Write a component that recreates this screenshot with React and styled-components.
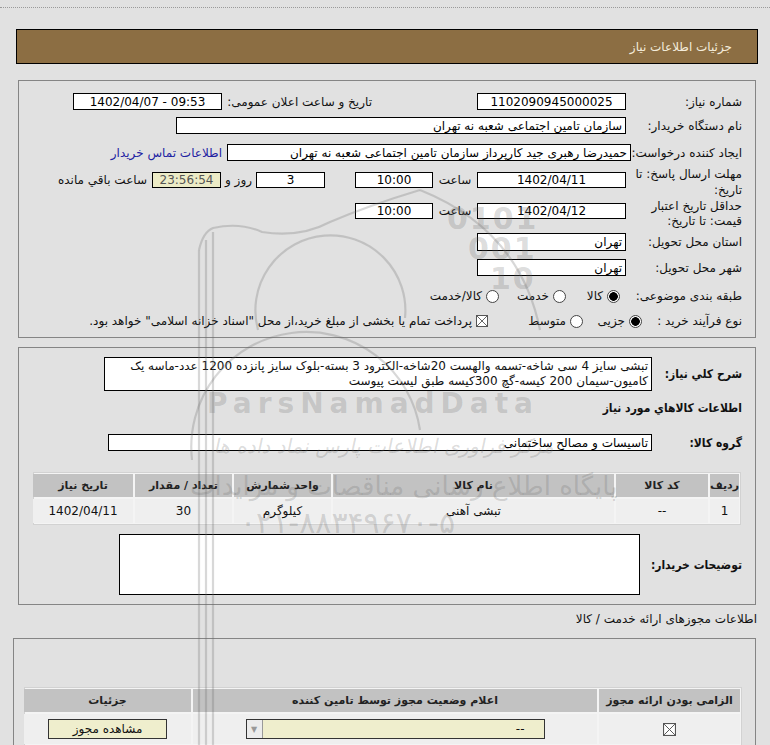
import React from "react";
import styled, { createGlobalStyle } from "styled-components";

const Global = createGlobalStyle`
  html, body { margin: 0; padding: 0; background: #e1e1e1; overflow: hidden; }
`;

const Page = styled.div`
  position: relative;
  width: 770px;
  height: 745px;
  overflow: hidden;
  box-sizing: border-box;
  padding-top: 7px;
  background: #e1e1e1;
  direction: rtl;
  font-family: "DejaVu Sans", Tahoma, sans-serif;
  font-size: 12px;
  color: #111;
`;

const DottedRule = styled.div`
  border-top: 1px dotted #9a9a9a;
`;

const HeaderBar = styled.div`
  box-sizing: border-box;
  height: 35px;
  margin: 21px 12px 0 16px;
  border: 1px solid #000;
  background: #8c6e43;
  color: #f4ecdb;
  display: flex;
  align-items: center;
  padding-right: 25px;
  font-size: 12px;
`;

const Panel = styled.div`
  box-sizing: border-box;
  height: ${(p) => p.$h}px;
  margin: ${(p) => p.$mt}px 14px 0 ${(p) => p.$ml}px;
  padding-top: ${(p) => p.$pt}px;
  border: 1px solid #858585;
  display: flex;
  flex-direction: column;
`;

const Row = styled.div`
  display: flex;
  align-items: ${(p) => (p.$top ? "flex-start" : "center")};
  height: ${(p) => p.$h}px;
  margin-top: ${(p) => p.$mt || 0}px;
  padding-right: 13px;
  flex: none;
`;

const Cluster = styled.div`
  display: flex;
  align-items: center;
  height: ${(p) => p.$h}px;
  margin-top: ${(p) => p.$mt}px;
`;

const Label = styled.div`
  flex: none;
  width: ${(p) => (p.$w ? `${p.$w}px` : "auto")};
  margin-right: ${(p) => p.$mr || 0}px;
  text-align: right;
  white-space: nowrap;
  font-family: ${(p) =>
    p.$bold ? '"DejaVu Sans Condensed", "DejaVu Sans", sans-serif' : "inherit"};
  font-size: 12px;
  font-weight: ${(p) => (p.$bold ? 700 : 400)};
  line-height: ${(p) => (p.$lh ? `${p.$lh}px` : "normal")};
  color: #111;
`;

const Word = styled.div`
  flex: none;
  width: ${(p) => (p.$w ? `${p.$w}px` : "auto")};
  margin-right: ${(p) => p.$mr || 0}px;
  text-align: center;
  white-space: nowrap;
`;

const Field = styled.div`
  box-sizing: border-box;
  flex: none;
  width: ${(p) => p.$w}px;
  height: ${(p) => p.$h || 17}px;
  margin-right: ${(p) => p.$mr || 0}px;
  border: 1px solid #000;
  background: ${(p) => (p.$tint ? "#ecebc6" : "#fff")};
  color: ${(p) => (p.$tint ? "#555" : "#000")};
  display: flex;
  align-items: center;
  justify-content: ${(p) => (p.$center ? "center" : "flex-start")};
  padding: 0 3px;
  white-space: nowrap;
  overflow: hidden;
`;

const TextBlock = styled.div`
  box-sizing: border-box;
  flex: none;
  width: ${(p) => p.$w}px;
  height: ${(p) => p.$h}px;
  border: 1px solid #000;
  background: #fff;
  padding: 1px 3px;
  line-height: 15px;
  text-align: right;
  white-space: nowrap;
  overflow: hidden;
`;

const ContactLink = styled.a`
  margin-right: 5px;
  color: #2222a2;
  text-decoration: none;
  white-space: nowrap;
`;

const Choice = styled.div`
  flex: none;
  display: flex;
  align-items: center;
  gap: 4px;
  width: ${(p) => (p.$w ? `${p.$w}px` : "auto")};
  white-space: nowrap;
`;

const Radio = styled.span`
  box-sizing: border-box;
  width: 13px;
  height: 13px;
  border-radius: 50%;
  border: 1px solid #444;
  background: ${(p) =>
    p.$checked ? "radial-gradient(circle, #000 0 4px, #fff 4.6px)" : "#fff"};
  flex: none;
`;

const CheckMark = styled.svg`
  flex: none;
  width: ${(p) => p.$s}px;
  height: ${(p) => p.$s}px;
  display: block;
`;

const Grid = styled.div`
  box-sizing: border-box;
  display: grid;
  grid-template-columns: ${(p) => p.$cols};
  grid-template-rows: ${(p) => p.$rows};
  gap: 2px;
  padding: 1px;
  width: ${(p) => p.$w}px;
  margin-top: ${(p) => p.$mt}px;
  margin-right: ${(p) => p.$mr}px;
  background: #f4f4f4;
  border: 1px solid #d2d2d2;
  flex: none;
`;

const HeadCell = styled.div`
  background: #c2c2c2;
  display: flex;
  align-items: center;
  justify-content: center;
  font-size: 11px;
  font-weight: 700;
  color: #222;
  white-space: nowrap;
`;

const Cell = styled.div`
  background: #efefef;
  display: flex;
  align-items: center;
  justify-content: center;
  white-space: nowrap;
`;

const SectionTitle = styled.div`
  margin: 7px 13px 0 0;
  height: 15px;
  line-height: 15px;
  white-space: nowrap;
`;

const SelectBox = styled.div`
  box-sizing: border-box;
  width: 299px;
  height: 20px;
  border: 1px solid #333;
  background: #efeecd;
  display: flex;
  align-items: center;
  justify-content: space-between;
  padding-right: 19px;
`;

const DropBtn = styled.span`
  box-sizing: border-box;
  width: 16px;
  height: 100%;
  background: #ececec;
  border-right: 1px solid #999;
  display: flex;
  align-items: center;
  justify-content: center;
  color: #999;
  font-size: 8px;
`;

const ActionButton = styled.div`
  box-sizing: border-box;
  width: 119px;
  height: 20px;
  border: 1px solid #333;
  background: #efeecd;
  display: flex;
  align-items: center;
  justify-content: center;
`;

const Watermark = styled.div`
  position: absolute;
  inset: 0;
  pointer-events: none;
  z-index: 3;
  color: rgba(105, 105, 105, 0.24);
`;

const WmArt = styled.svg`
  position: absolute;
  left: 0;
  top: 0;
`;

const WmText = styled.div`
  position: absolute;
  left: ${(p) => p.$x}px;
  top: ${(p) => p.$y}px;
  font-family: "DejaVu Sans", sans-serif;
  font-size: ${(p) => p.$size}px;
  font-weight: ${(p) => (p.$bold ? 700 : 400)};
  letter-spacing: ${(p) => p.$ls || 0}px;
  line-height: 1;
  white-space: nowrap;
  direction: ${(p) => (p.$latin ? "ltr" : "rtl")};
  transform: ${(p) => p.$skew || "none"};
`;

const XBox = ({ s = 12 }) => (
  <CheckMark $s={s} viewBox="0 0 12 12">
    <rect x="0.5" y="0.5" width="11" height="11" fill="#fff" stroke="#555" />
    <path d="M1 1 L11 11 M11 1 L1 11" stroke="#555" strokeWidth="0.9" />
  </CheckMark>
);

export default function App() {
  return (
    <>
      <Global />
      <Page>
        <DottedRule />
        <HeaderBar>جزئیات اطلاعات نیاز</HeaderBar>

        <Panel $h={258} $mt={16} $ml={18} $pt={12}>
          <Row $h={17}>
            <Label $w={116}>شماره نیاز:</Label>
            <Field $w={149} $center>1102090945000025</Field>
            <Label $w={150} $mr={105}>تاریخ و ساعت اعلان عمومی:</Label>
            <Field $w={149} $center>
              <span dir="ltr">1402/04/07 - 09:53</span>
            </Field>
          </Row>
          <Row $h={17} $mt={7}>
            <Label $w={116}>نام دستگاه خریدار:</Label>
            <Field $w={450}>سازمان تامین اجتماعی شعبه نه تهران</Field>
          </Row>
          <Row $h={17} $mt={10}>
            <Label $w={111}>ایجاد کننده درخواست:</Label>
            <Field $w={404}>حمیدرضا رهبری جید کارپرداز سازمان تامین اجتماعی شعبه نه تهران</Field>
            <ContactLink href="#">اطلاعات تماس خریدار</ContactLink>
          </Row>
          <Row $h={32} $mt={5} $top>
            <Label $w={116} $lh={16}>
              مهلت ارسال پاسخ: تا
              <br />
              تاریخ:
            </Label>
            <Cluster $h={16} $mt={6}>
              <Field $w={149} $h={16} $center>1402/04/11</Field>
              <Word $w={44}>ساعت</Word>
              <Field $w={78} $h={16} $center>10:00</Field>
              <Field $w={69} $h={16} $mr={30} $center>3</Field>
              <Word $w={35}>روز و</Word>
              <Field $w={69} $h={16} $center $tint>23:56:54</Field>
              <Word $mr={5}>ساعت باقي مانده</Word>
            </Cluster>
          </Row>
          <Row $h={31} $mt={1} $top>
            <Label $w={116} $lh={15}>
              حداقل تاریخ اعتبار
              <br />
              قیمت: تا تاریخ:
            </Label>
            <Cluster $h={16} $mt={4}>
              <Field $w={149} $h={16} $center>1402/04/12</Field>
              <Word $w={44}>ساعت</Word>
              <Field $w={78} $h={16} $center>10:00</Field>
            </Cluster>
          </Row>
          <Row $h={18} $mt={3}>
            <Label $w={116}>استان محل تحویل:</Label>
            <Field $w={149} $h={18}>تهران</Field>
          </Row>
          <Row $h={17} $mt={8}>
            <Label $w={116}>شهر محل تحویل:</Label>
            <Field $w={149}>تهران</Field>
          </Row>
          <Row $h={18} $mt={11}>
            <Label $w={122}>طبقه بندی موضوعی:</Label>
            <Choice $w={54}>
              <Radio $checked />
              کالا
            </Choice>
            <Choice $w={67}>
              <Radio />
              خدمت
            </Choice>
            <Choice>
              <Radio />
              کالا/خدمت
            </Choice>
          </Row>
          <Row $h={18} $mt={7}>
            <Label $w={100}>نوع فرآیند خرید :</Label>
            <Choice $w={59}>
              <Radio $checked />
              جزیی
            </Choice>
            <Choice $w={95}>
              <Radio />
              متوسط
            </Choice>
            <Choice>
              <XBox s={12} />
              پرداخت تمام یا بخشی از مبلغ خرید،از محل "اسناد خزانه اسلامی" خواهد بود.
            </Choice>
          </Row>
        </Panel>

        <Panel $h={258} $mt={9} $ml={18} $pt={9}>
          <Row $h={34}>
            <Label $w={90} $bold>
              شرح کلي نیاز:
            </Label>
            <TextBlock $w={548} $h={34}>
              تبشی سایز 4 سی شاخه-تسمه والهست 20شاخه-الکترود 3 بسته-بلوک سایز پانزده 1200 عدد-ماسه یک
              <br />
              کامیون-سیمان 200 کیسه-گچ 300کیسه طبق لیست پیوست
            </TextBlock>
          </Row>
          <Row $h={18} $mt={8}>
            <Label $bold>اطلاعات كالاهاي مورد نياز</Label>
          </Row>
          <Row $h={17} $mt={17}>
            <Label $w={90} $bold>
              گروه کالا:
            </Label>
            <Field $w={544}>تاسیسات و مصالح ساختمانی</Field>
          </Row>
          <Grid
            $w={708}
            $mt={21}
            $mr={14}
            $cols="29px 92px 281px 97px 97px 100px"
            $rows="23px 24px"
          >
            <HeadCell>ردیف</HeadCell>
            <HeadCell>کد کالا</HeadCell>
            <HeadCell>نام کالا</HeadCell>
            <HeadCell>واحد شمارش</HeadCell>
            <HeadCell>تعداد / مقدار</HeadCell>
            <HeadCell>تاریخ نیاز</HeadCell>
            <Cell>1</Cell>
            <Cell>--</Cell>
            <Cell>تبشی آهنی</Cell>
            <Cell>کیلوگرم</Cell>
            <Cell>30</Cell>
            <Cell>1402/04/11</Cell>
          </Grid>
          <Row $h={61} $mt={9}>
            <Label $w={102} $bold>
              توضیحات خریدار:
            </Label>
            <TextBlock $w={521} $h={61} />
          </Row>
        </Panel>

        <SectionTitle>اطلاعات مجوزهای ارائه خدمت / کالا</SectionTitle>

        <Panel $h={140} $mt={11} $ml={13} $pt={0}>
          <Grid
            $w={718}
            $mt={48}
            $mr={13}
            $cols="141px 404px 167px"
            $rows="23px 30px"
          >
            <HeadCell>الزامی بودن ارائه مجوز</HeadCell>
            <HeadCell>اعلام وضعیت مجوز توسط تامین کننده</HeadCell>
            <HeadCell>جزئیات</HeadCell>
            <Cell>
              <XBox s={13} />
            </Cell>
            <Cell>
              <SelectBox>
                <span>--</span>
                <DropBtn>▼</DropBtn>
              </SelectBox>
            </Cell>
            <Cell>
              <ActionButton>مشاهده مجوز</ActionButton>
            </Cell>
          </Grid>
        </Panel>

        <Watermark>
          <WmArt width="770" height="745" viewBox="0 0 770 745">
            <g fill="none" stroke="rgba(105,105,105,0.26)" strokeWidth="2.2">
              <path d="M199 250 L199 745 M206 240 L206 745 M213 232 L213 745" />
              <path d="M199 250 Q203 232 213 228 Q240 222 262 232 Q300 238 330 222 Q370 205 420 190" />
              <path d="M258 330 A75 75 0 1 1 405 318" />
              <path d="M192 460 A115 115 0 0 1 420 430" />
              <path d="M420 190 Q520 230 540 330" />
            </g>
          </WmArt>
          <WmText $x={447} $y={204} $size={30} $bold $latin $ls={2}>0101</WmText>
          <WmText $x={468} $y={234} $size={30} $bold $latin $ls={2}>001</WmText>
          <WmText $x={490} $y={264} $size={30} $bold $latin $ls={2}>10</WmText>
          <WmText $x={207} $y={390} $size={28} $bold $latin $ls={6}>ParsNamadData</WmText>
          <WmText $x={215} $y={436} $size={20} $skew="skewX(-12deg)">مرکز فراوری اطلاعات پارس نماد داده ها</WmText>
          <WmText $x={190} $y={473} $size={26}>پایگاه اطلاع رسانی مناقصات و مزایدات</WmText>
          <WmText $x={240} $y={508} $size={30}>۰۲۱-۸۸۳۴۹۶۷۰-۵</WmText>
        </Watermark>
      </Page>
    </>
  );
}
